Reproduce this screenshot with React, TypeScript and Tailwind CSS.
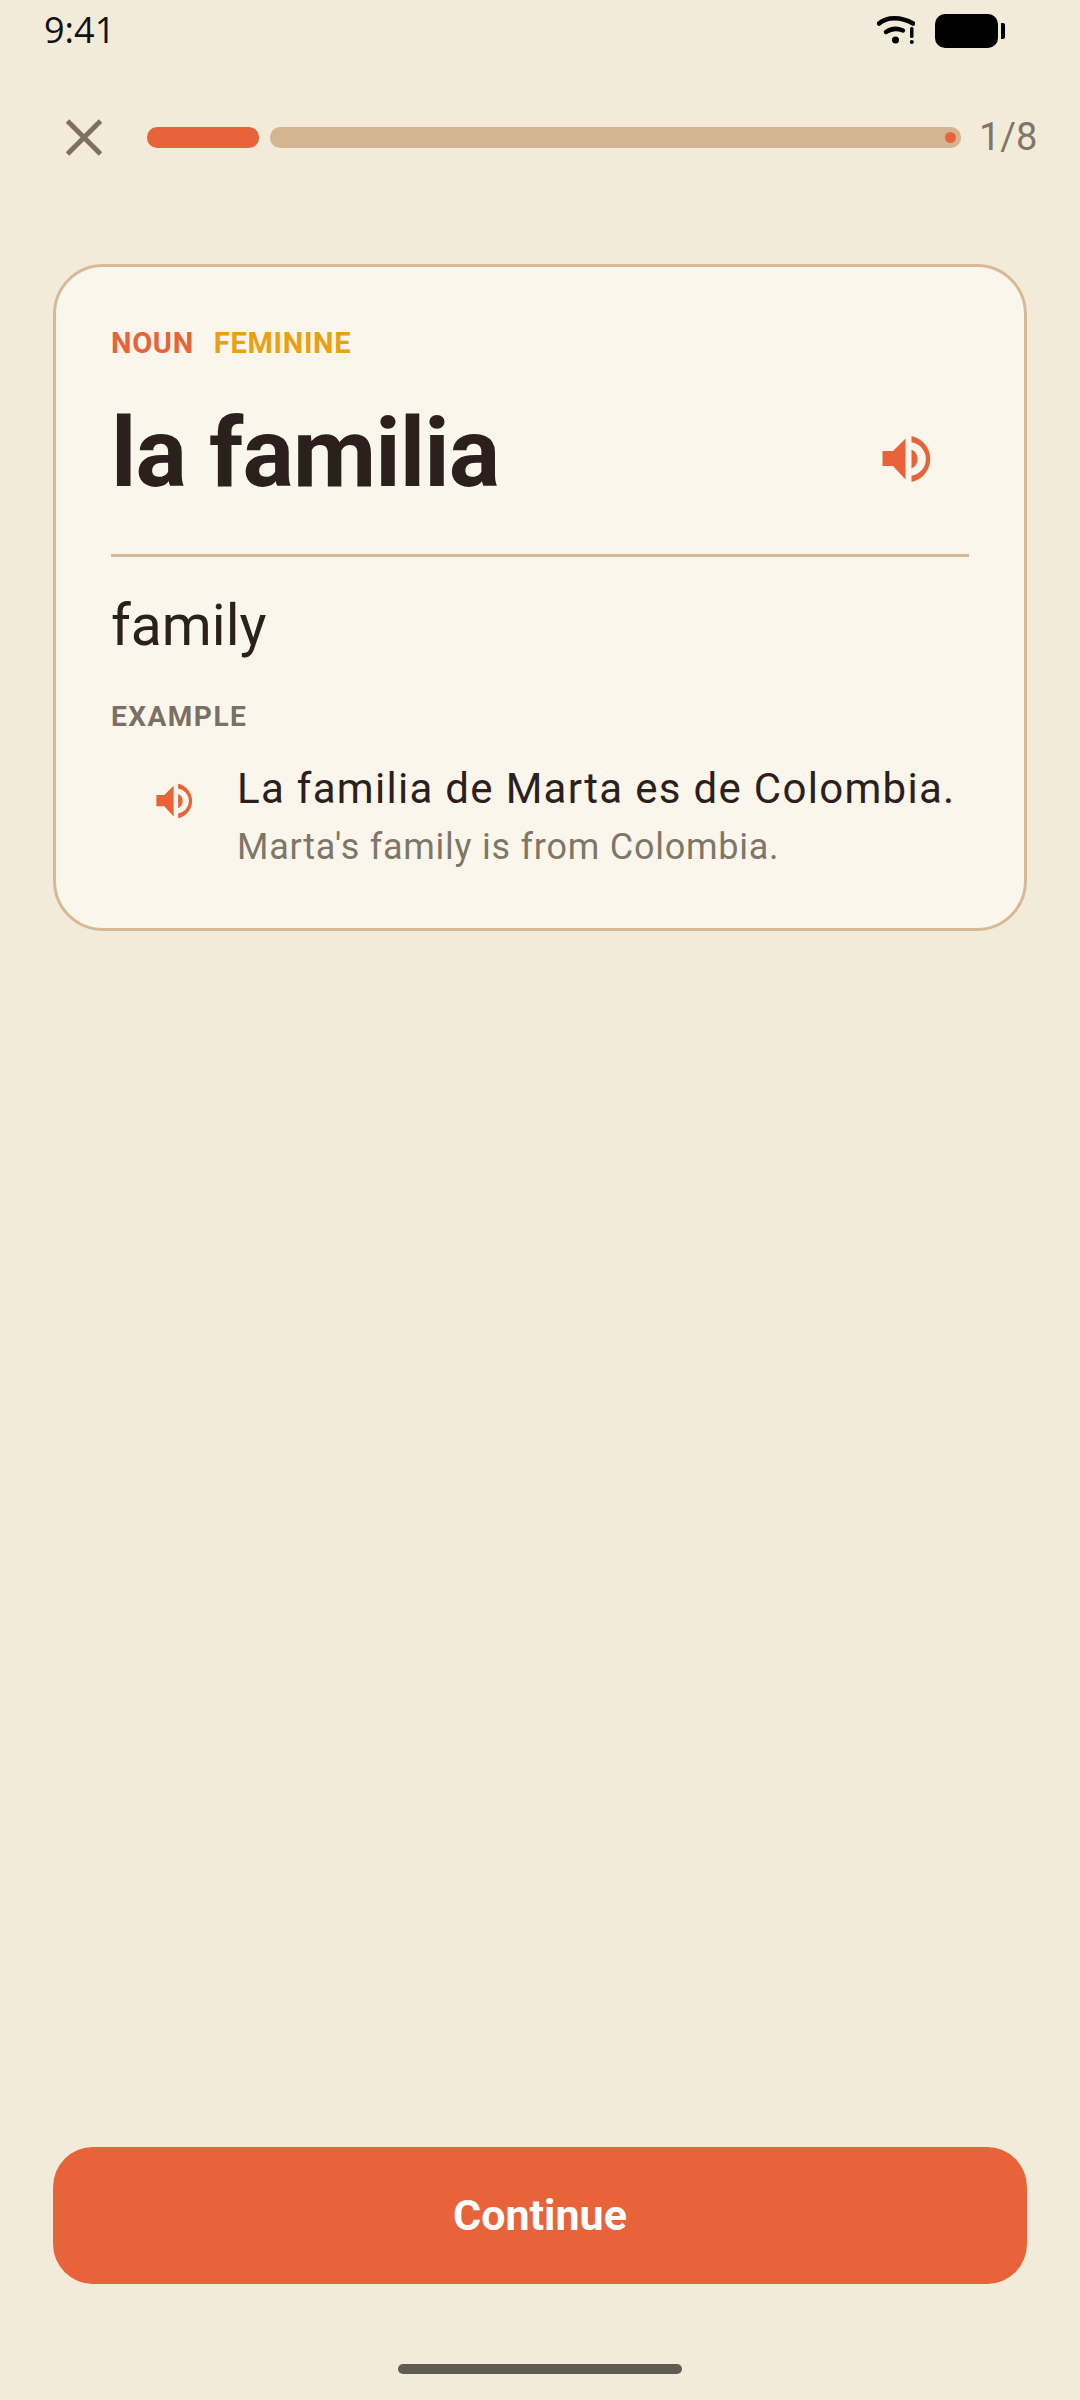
const Speaker = ({ className }: { className: string }) => (
    <svg viewBox="0 0 48 48" className={className} fill="#e9633a">
        <path d="M0.5 16H11L23.5 3.5V44.5L11 31H0.5Z" />
        <path d="M29.5 14.5A10.5 10.5 0 0 1 29.5 33.5Z" />
        <path d="M29.5 1A23.5 23.5 0 0 1 29.5 47V40.8A17 17 0 0 0 29.5 7.2Z" />
    </svg>
);

const StatusBar = () => (
    <div className="flex h-[60px] items-start justify-between pl-[44px] pr-[75px]">
        <span className="mt-[6px] text-[36px] leading-[48px] text-[#111] font-['Open_Sans',sans-serif]">9:41</span>
        <div className="flex items-start pt-[14px]">
            <svg viewBox="0 0 38 30" className="mt-[1px] h-[30px] w-[38px]">
                <path d="M2 8.5C10 1.5 24 1.5 36 8.5" fill="none" stroke="#000" strokeWidth="4.5" strokeLinecap="round" />
                <path d="M9 17C14 13.5 20 13 26 15.5" fill="none" stroke="#000" strokeWidth="4.5" strokeLinecap="round" />
                <circle cx="18.5" cy="25" r="3.5" fill="#000" />
                <rect x="33" y="12" width="3.5" height="11" rx="1.5" fill="#000" />
                <circle cx="34.8" cy="27" r="2" fill="#000" />
            </svg>
            <div className="ml-[20px] h-[34px] w-[63px] rounded-[10px] bg-black" />
            <div className="ml-[3px] mt-[9px] h-[16px] w-[4px] rounded-r-[2px] bg-black" />
        </div>
    </div>
);

const App = () => {
    return (
        <div className="flex h-[2400px] w-[1080px] flex-col overflow-hidden bg-[#f2ebd9] font-['Roboto',sans-serif]">
            <StatusBar />

            <div className="mt-[49px] flex h-[56px] items-center pl-[66px]">
                <svg viewBox="0 0 36 37" className="h-[37px] w-[36px]">
                    <path d="M1.5 2L34.5 35M34.5 2L1.5 35" fill="none" stroke="#7a7063" strokeWidth="5" />
                </svg>
                <div className="ml-[45px] h-[21px] w-[112px] rounded-[10px] bg-[#e9633a]" />
                <div className="ml-[11px] flex h-[21px] w-[691px] items-center justify-end rounded-[10px] bg-[#d3b592] pr-[5px]">
                    <div className="h-[11px] w-[11px] rounded-full bg-[#e9633a]" />
                </div>
                <span className="ml-[18px] text-[38px] leading-[56px] text-[#7f766a]">1/8</span>
            </div>

            <div className="mx-[53px] mt-[99px] flex h-[667px] flex-col rounded-[50px] border-[3px] border-[#d7b997] bg-[#fbf6eb] px-[55px] pt-[58px]">
                <div className="flex gap-[20px] text-[29px] font-bold leading-[36px] tracking-[0.7px]">
                    <span className="text-[#e9633a]">NOUN</span>
                    <span className="text-[#e9a012]">FEMININE</span>
                </div>
                <div className="mt-[27px] flex h-[130px] items-center justify-between pr-[39px]">
                    <h1 className="text-[96px] font-bold leading-[130px] tracking-[-0.9px] text-[#2b201c]">la familia</h1>
                    <Speaker className="mt-[12px] h-[48px] w-[48px]" />
                </div>
                <div className="mt-[36px] h-[3px] bg-[#d7b997]" />
                <p className="mt-[29px] text-[57px] leading-[80px] text-[#2b201c]">family</p>
                <p className="mt-[33px] text-[28px] font-bold leading-[36px] tracking-[1.5px] text-[#7a7063]">EXAMPLE</p>
                <div className="mt-[26px] flex">
                    <Speaker className="ml-[45px] mt-[22px] h-[36px] w-[36px]" />
                    <div className="ml-[45px]">
                        <p className="text-[42px] leading-[56px] tracking-[1.3px] text-[#2b201c]">La familia de Marta es de Colombia.</p>
                        <p className="mt-[5px] text-[36px] leading-[50px] tracking-[0.75px] text-[#7f766a]">Marta's family is from Colombia.</p>
                    </div>
                </div>
            </div>

            <button className="mx-[53px] mt-auto flex h-[137px] items-center justify-center rounded-[40px] bg-[#e9633a] text-[43px] font-bold text-white">
                Continue
            </button>

            <div className="mx-auto mb-[26px] mt-[80px] h-[10px] w-[284px] rounded-full bg-[#605c52]" />
        </div>
    );
};

export default App;
